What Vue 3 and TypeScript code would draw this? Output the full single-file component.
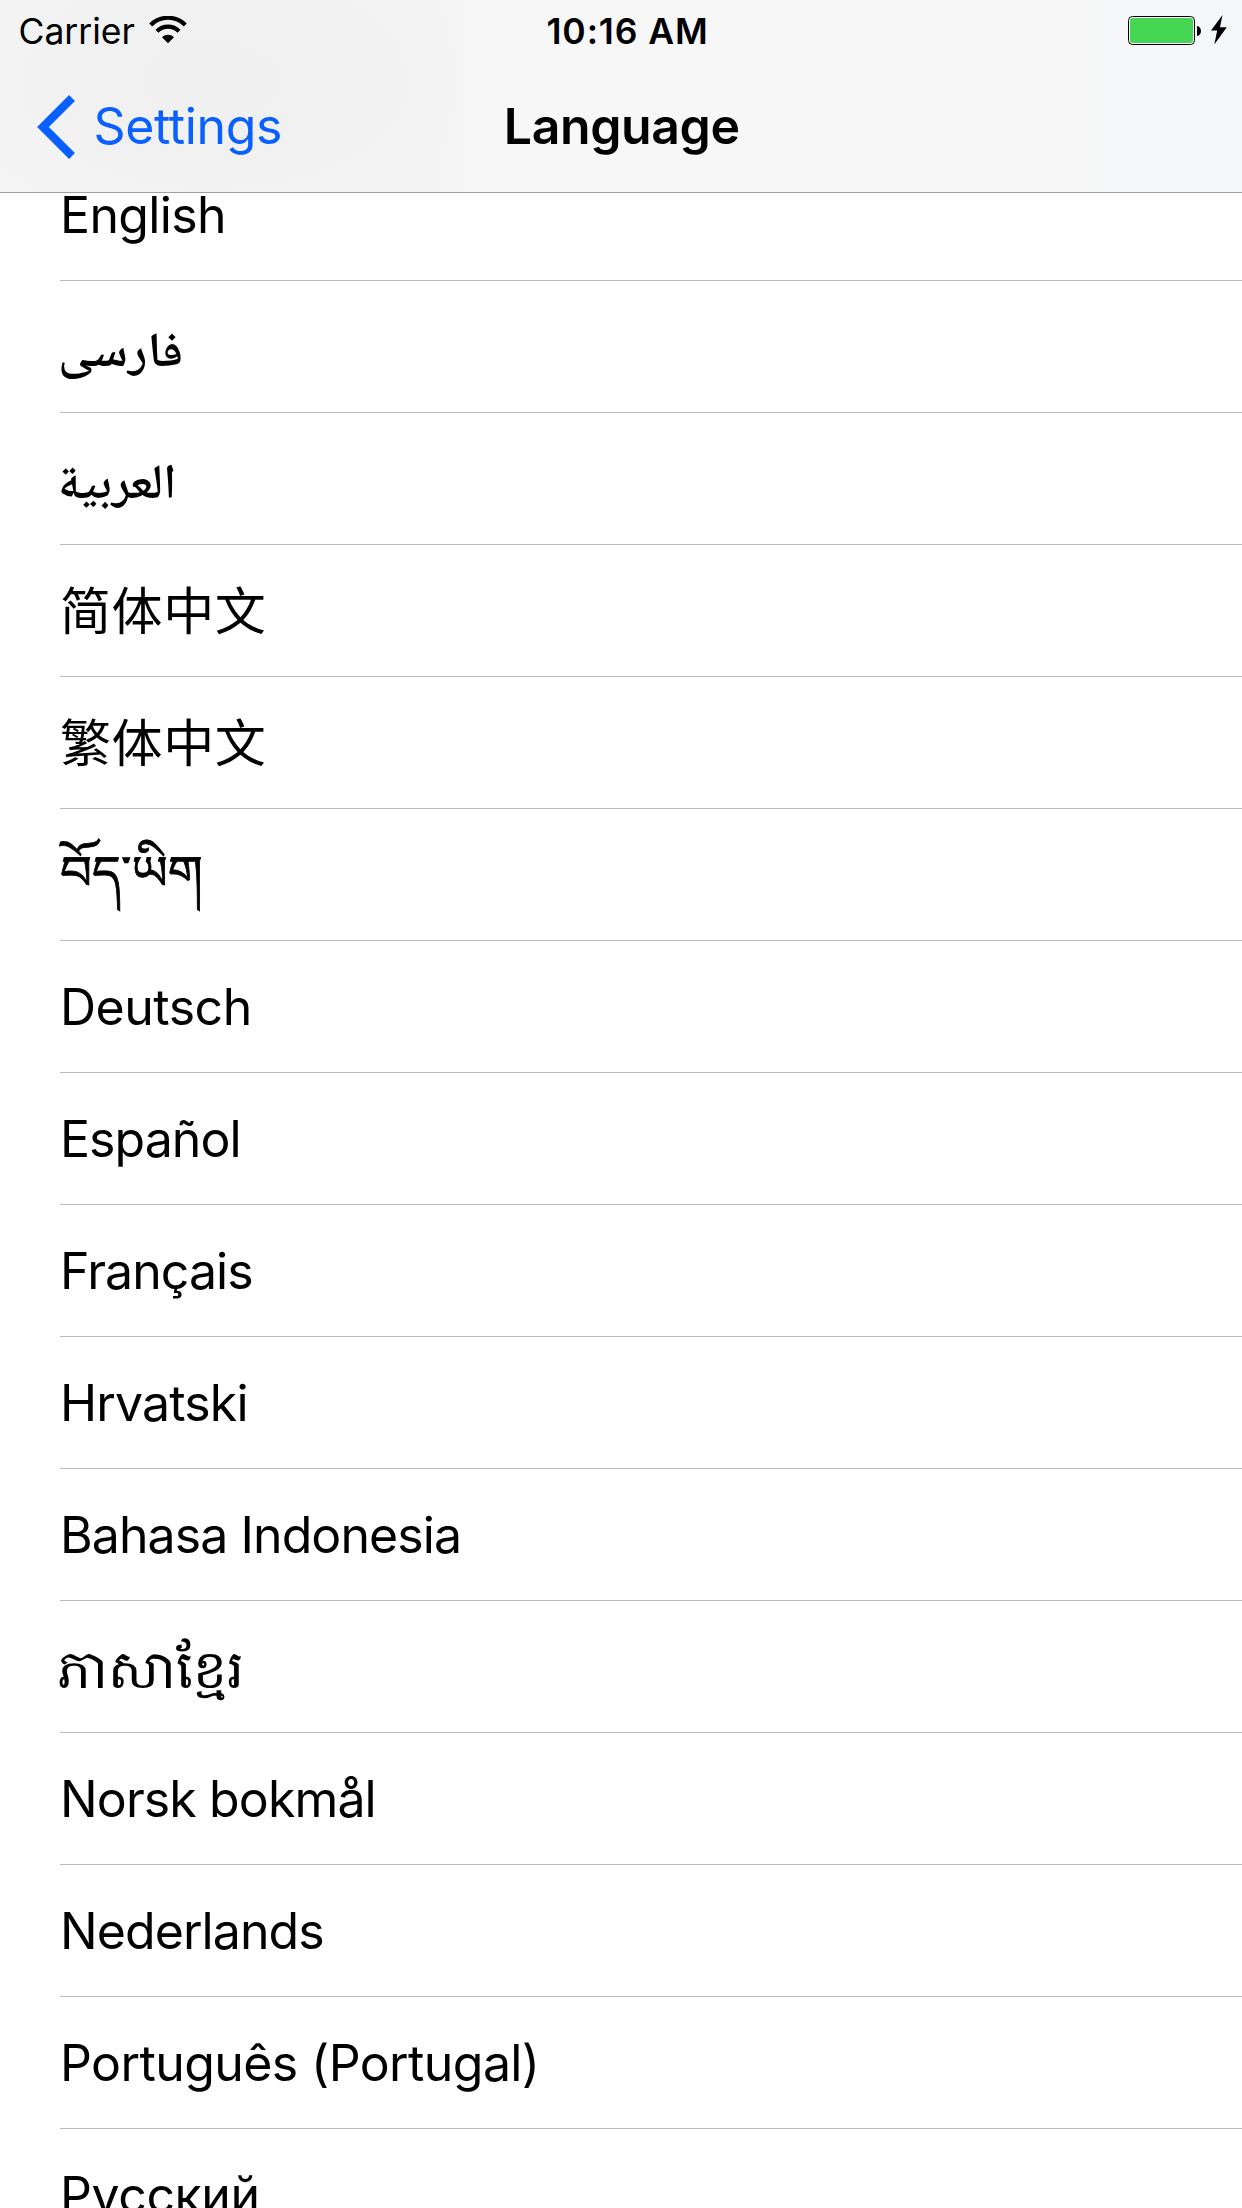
<script setup lang="ts">
interface Language {
  code: string
  name: string
  tracking?: number
  script?: string
}

const languages: Language[] = [
  { code: 'en', name: 'English', tracking: -0.65 },
  { code: 'fa', name: 'فارسی', script: 'arabic persian' },
  { code: 'ar', name: 'العربية', script: 'arabic' },
  { code: 'zh-Hans', name: '简体中文', script: 'cjk', tracking: 0.6 },
  { code: 'zh-Hant', name: '繁体中文', script: 'cjk', tracking: 0.6 },
  { code: 'bo', name: 'བོད་ཡིག', script: 'tibetan' },
  { code: 'de', name: 'Deutsch', tracking: -0.5 },
  { code: 'es', name: 'Español', tracking: -0.95 },
  { code: 'fr', name: 'Français', tracking: -0.92 },
  { code: 'hr', name: 'Hrvatski', tracking: -0.85 },
  { code: 'id', name: 'Bahasa Indonesia', tracking: -0.92 },
  { code: 'km', name: 'ភាសាខ្មែរ', script: 'khmer' },
  { code: 'nb', name: 'Norsk bokmål', tracking: -0.88 },
  { code: 'nl', name: 'Nederlands', tracking: -0.92 },
  { code: 'pt-PT', name: 'Português (Portugal)', tracking: -0.6 },
  { code: 'ru', name: 'Русский', tracking: -0.4 },
]
</script>

<template>
  <div class="screen">
    <header class="header">
      <div class="status">
        <div class="status-left">
          <span class="carrier">Carrier</span>
          <svg class="wifi" width="38" height="28" viewBox="0 0 38 28">
            <path d="M1.7 8.9A24.5 24.5 0 0 1 36.3 8.9" fill="none" stroke="#000" stroke-width="4.2" />
            <path d="M8 15.2A15.6 15.6 0 0 1 30 15.2" fill="none" stroke="#000" stroke-width="4.2" />
            <path d="M19 27.2L13 21.2A8.5 8.5 0 0 1 25 21.2Z" fill="#000" />
          </svg>
        </div>
        <span class="time">10:16 AM</span>
        <div class="status-right">
          <svg class="battery" width="75" height="30" viewBox="0 0 75 30">
            <rect x="0.5" y="0.5" width="66" height="28" rx="4" fill="#fff" stroke="#000" />
            <rect x="2" y="2" width="63" height="25" rx="2.5" fill="#45d754" />
            <path d="M69 10C74.300 10.500 74.300 19.500 69 20Z" fill="#000" />
          </svg>
          <svg class="bolt" width="16" height="30" viewBox="0 0 16 30">
            <path d="M11.500 0L0 15.500H6.200L3.300 29.500L15.800 12.200H9Z" fill="#000" />
          </svg>
        </div>
      </div>
      <nav class="nav">
        <a class="back">
          <svg class="chevron" width="38" height="64" viewBox="0 0 38 64">
            <path d="M35 3L6 32L35 61" fill="none" stroke="#0a60ff" stroke-width="8.300" />
          </svg>
          <span class="back-label">Settings</span>
        </a>
        <h1 class="title">Language</h1>
      </nav>
    </header>
    <main class="viewport">
      <ul class="list">
        <li v-for="lang in languages" :key="lang.code" class="row">
          <span
            class="name"
            :class="lang.script"
            :lang="lang.code"
            dir="auto"
            :style="{ letterSpacing: `${lang.tracking ?? 0}px` }"
          >{{ lang.name }}</span>
        </li>
      </ul>
    </main>
  </div>
</template>

<style>
body {
  margin: 0;
  background: #fff;
}
</style>

<style scoped>
.screen {
  width: 1242px;
  height: 2208px;
  display: flex;
  flex-direction: column;
  overflow: hidden;
  background: #fff;
  color: #000;
  font-family: Inter, "Liberation Sans", sans-serif;
}
.header {
  flex: none;
  height: 192px;
  border-bottom: 1px solid #a0a0a2;
  background:
    radial-gradient(ellipse 260px 150px at 210px 80px, #f0f0f0 0, #f1f1f1 60%, rgba(241, 241, 241, 0) 100%),
    linear-gradient(90deg, #f5f5f5 0, #f4f4f4 420px, #f7f7f7 500px, #f7f7f7 1050px, #f5f6f7 1130px, #f5f6f7 100%);
}
.status {
  height: 60px;
  display: grid;
  grid-template-columns: 1fr auto 1fr;
  align-items: start;
}
.status-left {
  display: flex;
  padding-left: 18.5px;
}
.carrier {
  font-size: 35.500px;
  line-height: 63px;
  letter-spacing: 0;
}
.wifi {
  margin: 16px 0 0 14.5px;
}
.time {
  padding-left: 13px;
  font-size: 35.500px;
  font-weight: 600;
  line-height: 63px;
  letter-spacing: 0.9px;
}
.status-right {
  display: flex;
  justify-content: flex-end;
  padding-right: 15px;
}
.battery {
  margin-top: 16px;
}
.bolt {
  margin: 15px 0 0 8px;
}
.nav {
  height: 132px;
  display: grid;
  grid-template-columns: 1fr auto 1fr;
}
.back {
  display: flex;
  color: #0a60ff;
  padding-left: 37px;
}
.chevron {
  margin-top: 35px;
}
.back-label {
  margin-left: 18.5px;
  font-size: 50px;
  line-height: 132px;
  letter-spacing: -0.35px;
}
.title {
  margin: 0;
  padding-left: 1.5px;
  font-size: 50px;
  font-weight: 600;
  line-height: 132px;
  letter-spacing: -0.4px;
}
.viewport {
  flex: 1;
  min-height: 0;
  overflow: hidden;
}
.list {
  list-style: none;
  margin: -44px 0 0;
  padding: 0;
}
.row {
  box-sizing: border-box;
  height: 132px;
  margin-left: 60px;
  border-bottom: 1px solid #bcbbc1;
  display: flex;
}
.name {
  font-size: 50px;
  line-height: 132px;
  white-space: nowrap;
}
.cjk {
  font-family: "Noto Sans CJK SC", sans-serif;
  font-size: 51px;
  line-height: 127px;
}
.arabic {
  margin-left: -2px;
  font-family: "Noto Naskh Arabic", "DejaVu Sans", sans-serif;
  font-weight: 600;
  font-size: 49px;
  line-height: 149px;
}
.persian {
  transform: scaleX(1.04);
  transform-origin: left;
}
.tibetan {
  font-family: "Noto Serif Tibetan", serif;
  -webkit-text-stroke: 0.8px #000;
  transform: scaleY(0.93);
  line-height: 157px;
}
.khmer {
  margin-left: -3px;
  font-size: 53.5px;
  line-height: 135px;
}
</style>
